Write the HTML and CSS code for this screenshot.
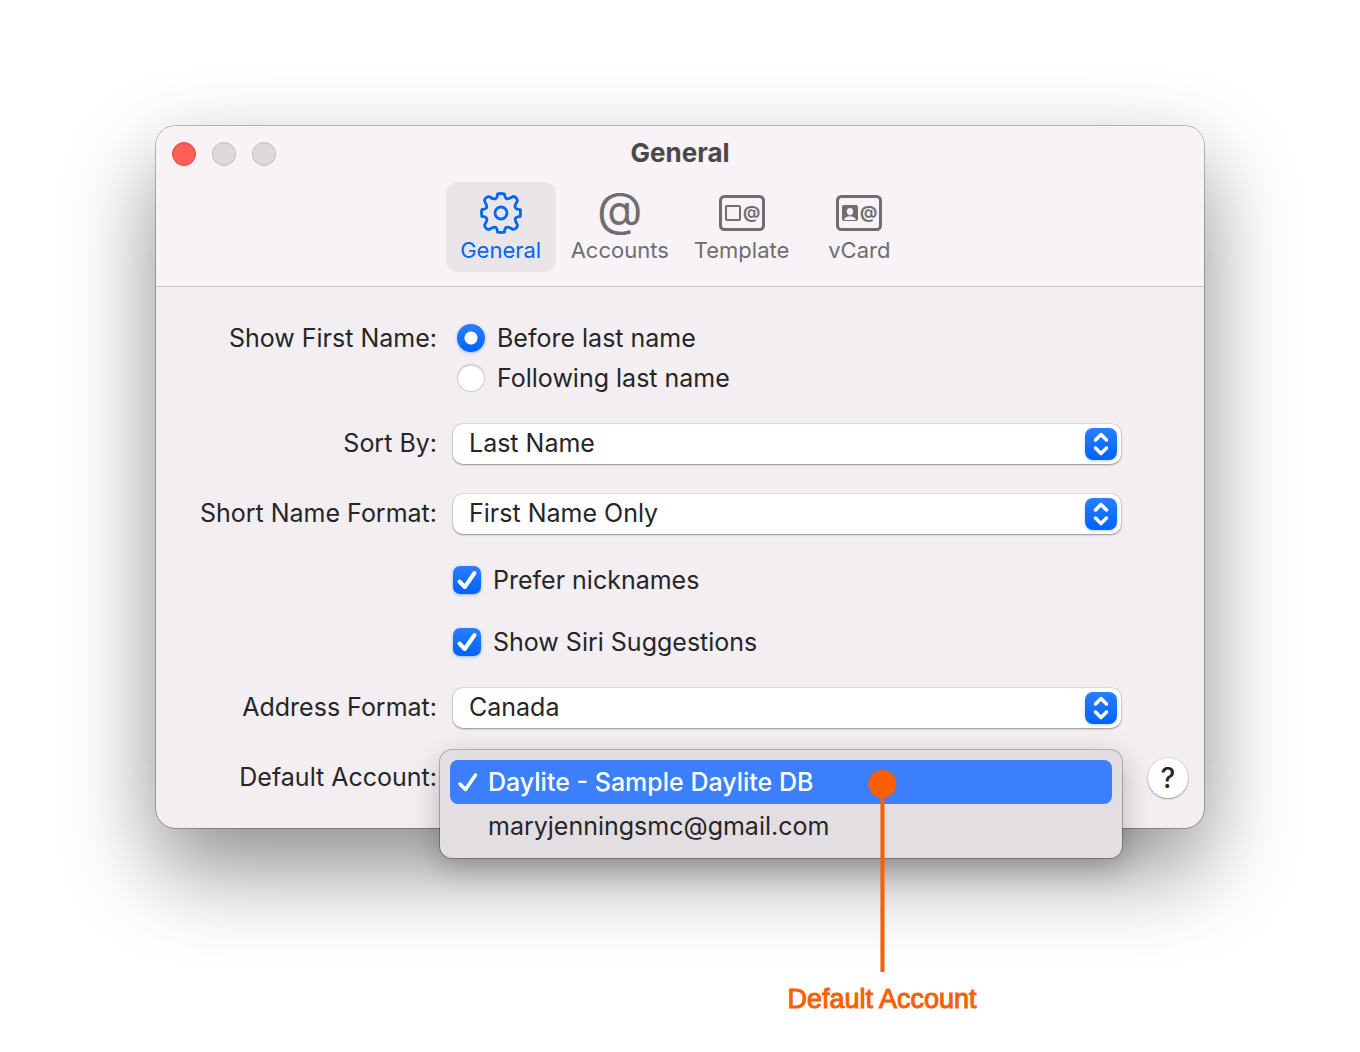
FILE: index.html
```html
<!DOCTYPE html>
<html lang="en">
<head>
    <meta charset="UTF-8">
    <meta name="viewport" content="width=device-width, initial-scale=1.0">
    <title>General</title>
    <link rel="stylesheet" href="styles.css">
</head>
<body>
    <main class="window">
        <header>
            <div class="titlebar">
                <div class="lights">
                    <button type="button" class="light close" aria-label="Close"></button>
                    <button type="button" class="light" aria-label="Minimize" disabled></button>
                    <button type="button" class="light" aria-label="Zoom" disabled></button>
                </div>
                <h1>General</h1>
            </div>
            <nav class="toolbar">
                <button type="button" class="tab active">
                    <svg width="46" height="42" viewBox="-23 -21 46 42" fill="none" stroke="currentColor" stroke-width="2.8" stroke-linejoin="round">
                        <path d="M3.4-19.2Q4-14.900 5.500-14.300T11.200-16Q13-17.200 15-15.200T16-11.200Q13.400-7.500 14.300-5.500T19.200-3.400Q19.800 0 19.200 3.400 14.900 4 14.300 5.500T16 11.200Q17.200 13 15.200 15T11.200 16Q7.500 13.400 5.500 14.300T3.400 19.200Q0 19.800-3.400 19.200-4 14.900-5.500 14.300T-11.200 16Q-13 17.200-15 15.200T-16 11.200Q-13.400 7.500-14.300 5.500T-19.200 3.400Q-19.800 0-19.200-3.400-14.900-4-14.300-5.500T-16-11.200Q-17.200-13-15.200-15T-11.200-16Q-7.500-13.400-5.500-14.300T-3.400-19.200Q0-19.800 3.400-19.200Z"/>
                        <circle r="6"/>
                    </svg>
                    <span>General</span>
                </button>
                <button type="button" class="tab">
                    <span class="at" aria-hidden="true">@</span>
                    <span>Accounts</span>
                </button>
                <button type="button" class="tab">
                    <svg width="46" height="42" viewBox="0 0 46 42" fill="none" stroke="currentColor">
                        <rect x="1.5" y="4.5" width="43" height="33" rx="4" stroke-width="3"/>
                        <rect x="7" y="14" width="14" height="14" rx="1" stroke-width="2"/>
                        <text class="small-at" x="24" y="26">@</text>
                    </svg>
                    <span>Template</span>
                </button>
                <button type="button" class="tab">
                    <svg width="46" height="42" viewBox="0 0 46 42" fill="none" stroke="currentColor">
                        <rect x="1.5" y="4.5" width="43" height="33" rx="4" stroke-width="3"/>
                        <rect x="6" y="13" width="16" height="16" rx="2" fill="currentColor" stroke="none"/>
                        <path class="person" d="M14 16c2 0 3.200 1.500 3.200 3.500S15.800 23.200 14 23.200 10.800 21.500 10.800 19.500 12 16 14 16ZM8 28c.6-2.600 3-3.800 6-3.800s5.400 1.200 6 3.800Z"/>
                        <text class="small-at" x="24" y="26">@</text>
                    </svg>
                    <span>vCard</span>
                </button>
            </nav>
        </header>

        <form>
            <div class="row top" role="radiogroup" aria-labelledby="first-name">
                <span class="name" id="first-name">Show First Name:</span>
                <div class="radios">
                    <label><input type="radio" name="first" checked>Before last name</label>
                    <label><input type="radio" name="first">Following last name</label>
                </div>
            </div>

            <div class="row">
                <label class="name" for="sort">Sort By:</label>
                <div class="popup">
                    <select id="sort">
                        <option>Last Name</option>
                        <option>First Name</option>
                    </select>
                    <svg width="32" height="32" viewBox="0 0 32 32"><path d="M10.500 12 16 6.500l5.500 5.500M10.500 20l5.500 5.500 5.500-5.500"/></svg>
                </div>
            </div>

            <div class="row">
                <label class="name" for="short">Short Name Format:</label>
                <div class="popup">
                    <select id="short">
                        <option>First Name Only</option>
                        <option>Last Name Only</option>
                    </select>
                    <svg width="32" height="32" viewBox="0 0 32 32"><path d="M10.500 12 16 6.500l5.500 5.500M10.500 20l5.500 5.500 5.500-5.500"/></svg>
                </div>
            </div>

            <div class="row">
                <label class="check">
                    <span class="box">
                        <input type="checkbox" checked>
                        <svg width="28" height="28" viewBox="0 0 28 28"><path d="M6.500 15.500 11.800 21 21.500 7"/></svg>
                    </span>
                    Prefer nicknames
                </label>
            </div>

            <div class="row">
                <label class="check">
                    <span class="box">
                        <input type="checkbox" checked>
                        <svg width="28" height="28" viewBox="0 0 28 28"><path d="M6.500 15.500 11.800 21 21.500 7"/></svg>
                    </span>
                    Show Siri Suggestions
                </label>
            </div>

            <div class="row">
                <label class="name" for="address">Address Format:</label>
                <div class="popup">
                    <select id="address">
                        <option>Canada</option>
                        <option>United States</option>
                    </select>
                    <svg width="32" height="32" viewBox="0 0 32 32"><path d="M10.500 12 16 6.500l5.500 5.500M10.500 20l5.500 5.500 5.500-5.500"/></svg>
                </div>
            </div>

            <div class="row">
                <span class="name" id="account">Default Account:</span>
                <div class="popup">
                    <div class="menu" role="listbox" aria-labelledby="account">
                        <button type="button" class="item selected" role="option" aria-selected="true">
                            <svg width="20" height="24" viewBox="0 0 20 24"><path d="M2 14 7.500 19.500 17.500 5"/></svg>
                            Daylite - Sample Daylite DB
                        </button>
                        <button type="button" class="item" role="option" aria-selected="false">maryjenningsmc@gmail.com</button>
                        <div class="callout">
                            <span class="dot"></span>
                            <span class="line"></span>
                            <span class="caption">Default Account</span>
                        </div>
                    </div>
                </div>
                <button type="button" class="help" aria-label="Help">?</button>
            </div>
        </form>
    </main>
</body>
</html>
```

FILE: styles.css
```css
/* Global Styles */
* {
    box-sizing: border-box;
}

body {
    margin: 0;
    min-height: 100vh;
    padding: 126px 156px;
    background-color: #fff;
    color: #262527;
    font-family: Inter, "Liberation Sans", sans-serif;
    font-size: 25px;
    line-height: 32px;
}

button,
select {
    font: inherit;
    color: inherit;
    border: none;
    padding: 0;
}

/* Window */
.window {
    min-width: 720px;
    border-radius: 20px;
    background-color: #f3eef2;
    box-shadow: 0 0 0 1px rgba(0, 0, 0, 0.25), 0 40px 90px rgba(0, 0, 0, 0.45);
}

header {
    background-color: #f8f3f7;
    border-bottom: 1px solid #cbc6ca;
    border-radius: 20px 20px 0 0;
    padding-bottom: 14px;
}

.titlebar {
    display: grid;
    grid-template-columns: 1fr auto 1fr;
    align-items: center;
    height: 56px;
    padding: 0 16px;
}

.lights {
    display: flex;
    gap: 16px;
}

.light {
    width: 24px;
    height: 24px;
    border: 1px solid #bfbabe;
    border-radius: 50%;
    background-color: #ddd8dc;
}

.close {
    border-color: #e2463f;
    background-color: #ff5f57;
}

h1 {
    margin: 0;
    padding-bottom: 2px;
    font-size: 26px;
    font-weight: 700;
    color: #4a484a;
}

/* Toolbar */
.toolbar {
    display: flex;
    justify-content: center;
    gap: 5px;
}

.tab {
    display: flex;
    flex-direction: column;
    align-items: center;
    min-width: 110px;
    height: 90px;
    padding: 10px 10px 0;
    border-radius: 12px;
    background: none;
    color: #6f6d70;
    font-size: 22px;
}

.active {
    background-color: #eae5e9;
    color: #0066f5;
}

.at {
    height: 42px;
    font-size: 47px;
    line-height: 34px;
}

.small-at {
    fill: currentColor;
    stroke: none;
    font-size: 17px;
    font-weight: 700;
}

.person {
    fill: #f8f3f7;
    stroke: none;
}

/* Form */
form {
    display: flex;
    flex-direction: column;
    gap: 30px;
    padding: 35px 0 30px;
}

.row {
    display: grid;
    grid-template-columns: 281px 1fr 67px;
    column-gap: 16px;
    align-items: center;
}

.row.top {
    align-items: start;
}

.name {
    padding-bottom: 2px;
    text-align: right;
    white-space: nowrap;
}

.radios {
    display: flex;
    flex-direction: column;
    gap: 12px;
    padding: 2px 4px;
}

.radios label,
.check {
    display: flex;
    align-items: center;
    gap: 12px;
    height: 28px;
}

.radios input {
    appearance: none;
    width: 28px;
    height: 28px;
    margin: 0;
    border-radius: 50%;
    background-color: #fff;
    box-shadow: inset 0 0 0 1px #cfcacd, inset 0 2px 2px rgba(0, 0, 0, 0.15);
}

.radios input:checked {
    background: radial-gradient(circle, #fff 6px, transparent 7px), linear-gradient(#2b7fff, #0062ff);
    box-shadow: 0 1px 3px rgba(0, 98, 255, 0.4);
}

.check {
    grid-column: 2;
    margin: 2px 0;
}

.box {
    position: relative;
    height: 28px;
}

.box input {
    appearance: none;
    width: 28px;
    height: 28px;
    margin: 0;
    border-radius: 7px;
    background-color: #fff;
    box-shadow: 0 1px 3px rgba(0, 98, 255, 0.4);
}

.box input:checked {
    background: linear-gradient(#2b7fff, #0062ff);
}

.box svg {
    position: absolute;
    top: 0;
    left: 0;
    pointer-events: none;
}

svg path {
    stroke-linecap: round;
    stroke-linejoin: round;
}

.box path,
.popup path {
    fill: none;
    stroke: #fff;
    stroke-width: 3.5;
}

.box path {
    stroke-width: 4;
}

/* Pop-up buttons */
.popup {
    position: relative;
    height: 40px;
}

.popup select {
    appearance: none;
    width: 100%;
    height: 40px;
    padding: 0 48px 2px 16px;
    border-radius: 10px;
    background-color: #fff;
    box-shadow: 0 0 0 1px rgba(0, 0, 0, 0.08), 0 1px 2px rgba(0, 0, 0, 0.35);
}

.popup > svg {
    position: absolute;
    top: 4px;
    right: 4px;
    border-radius: 8px;
    background: linear-gradient(#2b7fff, #0062ff);
    box-shadow: 0 1px 3px rgba(0, 98, 255, 0.3);
    pointer-events: none;
}

/* Open account menu */
.menu {
    position: absolute;
    top: -8px;
    left: -13px;
    right: -1px;
    padding: 10px;
    border-radius: 12px;
    background-color: #e3dee2;
    box-shadow: 0 0 0 1px rgba(0, 0, 0, 0.25), 0 10px 30px rgba(0, 0, 0, 0.25);
}

.item {
    display: flex;
    align-items: center;
    gap: 10px;
    width: 100%;
    height: 44px;
    padding-left: 38px;
    border-radius: 8px;
    background: none;
}

.selected {
    padding-left: 8px;
    background-color: #3b7ffc;
    color: #fff;
    font-weight: 500;
}

.help {
    width: 40px;
    height: 40px;
    margin-left: 11px;
    border-radius: 50%;
    background-color: #fff;
    box-shadow: 0 0 0 1px rgba(0, 0, 0, 0.08), 0 1px 2px rgba(0, 0, 0, 0.3);
    font-size: 28px;
    font-weight: 500;
}

/* Callout */
.callout {
    position: absolute;
    top: 20px;
    left: 442px;
    display: flex;
    flex-direction: column;
    align-items: center;
    transform: translateX(-50%);
    color: #fa5f00;
    white-space: nowrap;
}

.dot {
    width: 28px;
    height: 28px;
    border-radius: 50%;
    background-color: currentColor;
}

.line {
    width: 4px;
    height: 174px;
    background-color: currentColor;
}

.caption {
    margin-top: 11px;
    font-family: "Liberation Sans", Arial, sans-serif;
    font-size: 27px;
    -webkit-text-stroke: 1px currentColor;
}
```
